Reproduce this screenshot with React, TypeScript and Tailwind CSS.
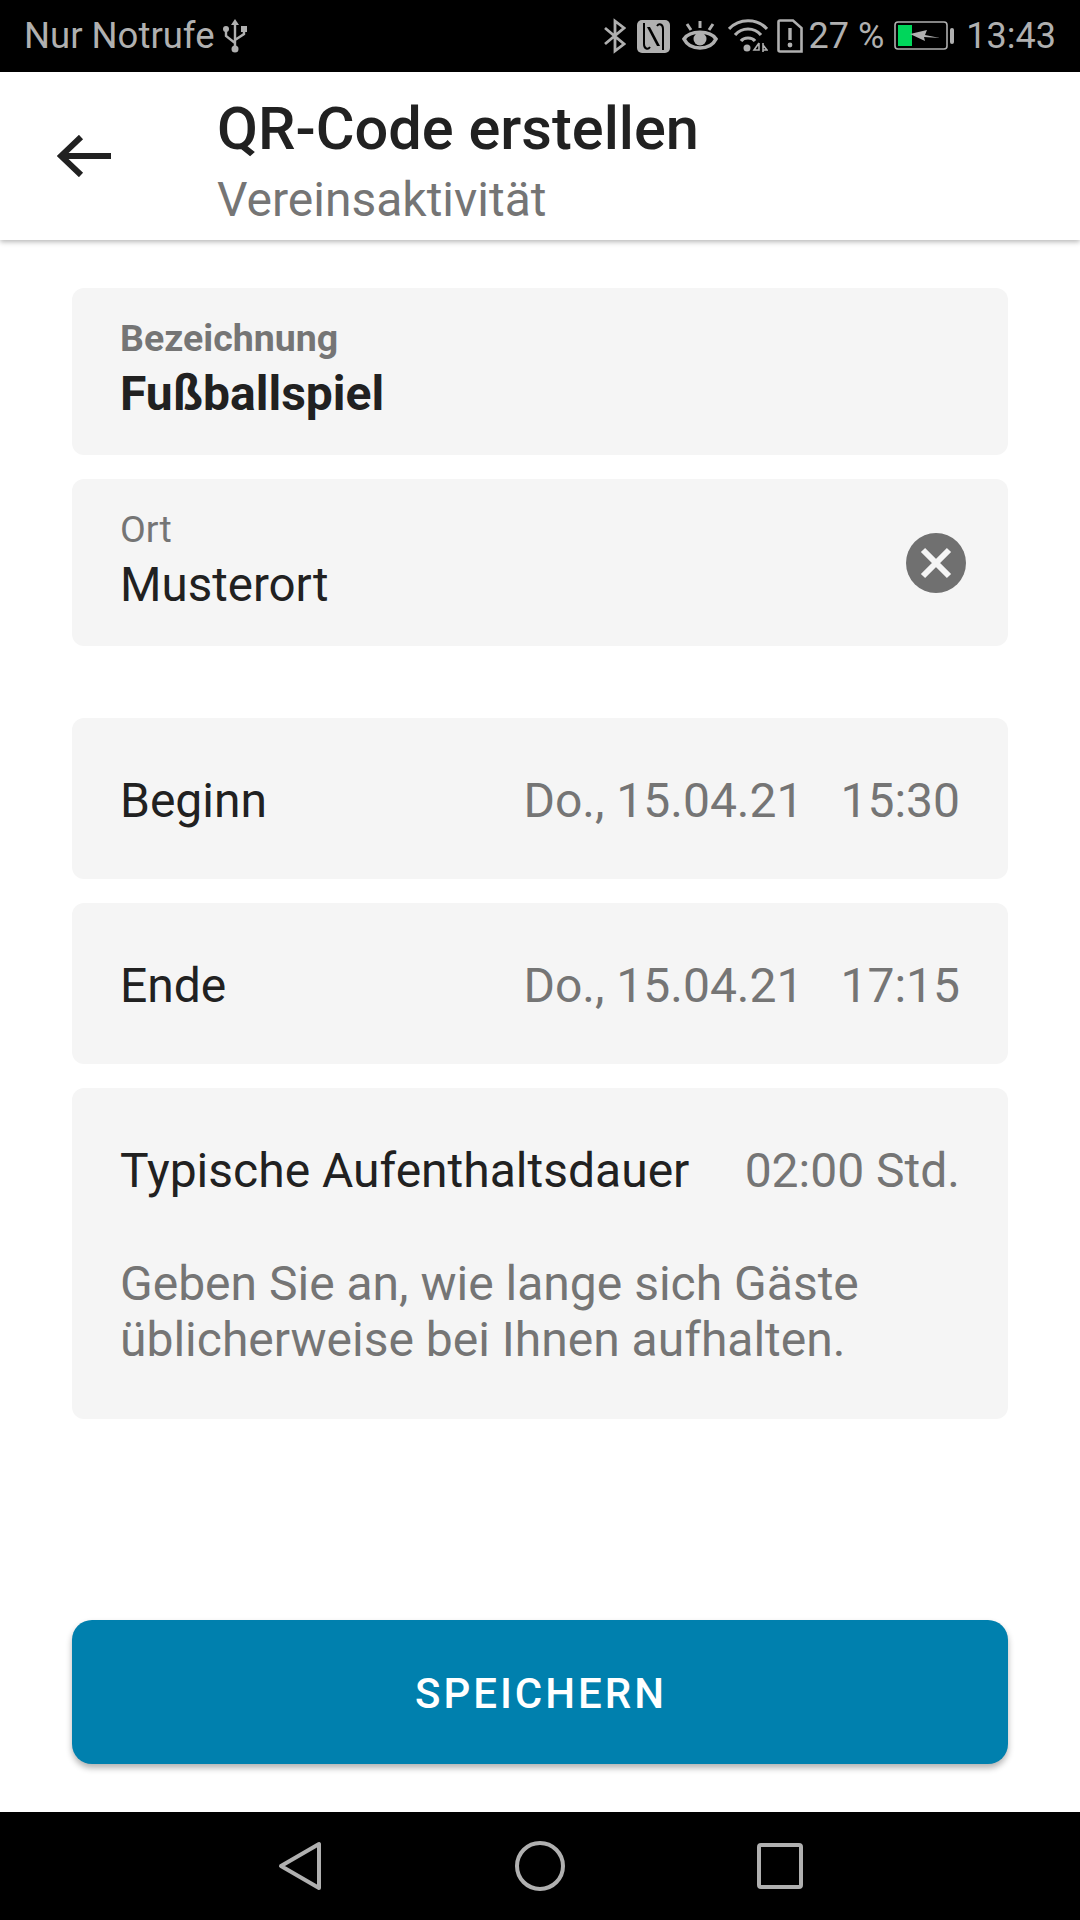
import React from "react";

const Card = ({ className = "", children }: { className?: string; children: React.ReactNode }) => (
  <div className={`rounded-xl bg-[#f5f5f5] px-12 ${className}`}>{children}</div>
);

const DateRow = ({ label, date, time }: { label: string; date: string; time: string }) => (
  <Card className="flex h-[161px] items-center justify-between pt-[4px]">
    <span className="text-[#212121]">{label}</span>
    <span className="flex gap-[37px] text-[#757575]">
      <span>{date}</span>
      <span>{time}</span>
    </span>
  </Card>
);

export default function App() {
  return (
    <div className="flex h-[1920px] w-[1080px] flex-col overflow-hidden bg-white text-[48px] font-['Roboto',sans-serif] leading-[56px]">
      <div className="flex h-[72px] shrink-0 items-center justify-between bg-black pl-[24px] pr-[24px] text-[36px] text-[#b0b0b0]">
        <div className="flex items-center gap-[9px]">
          <span className="text-[36.5px]">Nur Notrufe</span>
          <svg width="24" height="34" viewBox="0 0 24 34" fill="none" stroke="#b0b0b0" strokeWidth="2.4">
            <path d="M12 4V30M12 24L3 17V12M12 21L21 15V11" />
            <path d="M12 0L16 6H8Z" fill="#b0b0b0" stroke="none" />
            <circle cx="12" cy="30" r="3.5" fill="#b0b0b0" stroke="none" />
            <circle cx="3" cy="10" r="3" fill="#b0b0b0" stroke="none" />
            <rect x="18" y="7" width="6" height="6" fill="#b0b0b0" stroke="none" />
          </svg>
        </div>
        <div className="flex items-center">
          <svg width="22" height="36" viewBox="0 0 22 34" fill="none" stroke="#b0b0b0" strokeWidth="2.8">
            <path d="M1 9L20 25L11 32V2L20 9L1 25" />
          </svg>
          <svg width="33" height="33" viewBox="0 0 33 33" className="ml-[11px]">
            <rect width="33" height="33" rx="5" fill="#b0b0b0" />
            <path d="M7 3V24C7 29 11 30 13 27M26 30V9C26 4 22 3 20 6" fill="none" stroke="#000" strokeWidth="2" />
            <path d="M10 7H13L23 26H20Z" fill="#000" />
          </svg>
          <svg width="36" height="32" viewBox="0 0 36 32" fill="none" stroke="#b0b0b0" strokeWidth="3.6" className="ml-[12px]">
            <path d="M2 19C8 10 28 10 34 19C28 31 8 31 2 19Z" />
            <circle cx="18" cy="19" r="6.5" fill="#b0b0b0" stroke="none" />
            <path d="M18 1V8M5 4L9 10M31 4L27 10" strokeWidth="3" />
          </svg>
          <svg width="40" height="34" viewBox="0 0 40 34" fill="none" stroke="#b0b0b0" strokeWidth="3.2" className="ml-[10px]">
            <path d="M1 10C11 -1 29 -1 39 10M7 16C14 8 26 8 33 16M13 22C16 18 24 18 27 22" />
            <circle cx="19" cy="29" r="3.5" fill="#b0b0b0" stroke="none" />
            <path d="M31 24L26 31H31V24M35 24V33M35 26L39 31H35" strokeWidth="1.6" />
          </svg>
          <svg width="26" height="34" viewBox="0 0 26 34" fill="none" stroke="#b0b0b0" strokeWidth="2.6" className="ml-[9px]">
            <path d="M3 1.5H16L24.500 9V32.500H3C2 32.500 1.500 32 1.500 31V3C1.500 2 2 1.500 3 1.500Z" />
            <path d="M13 9V21" strokeWidth="3.4" />
            <circle cx="13" cy="26" r="2.4" fill="#b0b0b0" stroke="none" />
          </svg>
          <span className="ml-[6px]">27 %</span>
          <svg width="62" height="30" viewBox="0 0 62 30" fill="none" className="ml-[10px]">
            <rect x="1" y="1" width="52" height="27" rx="3" stroke="#b0b0b0" strokeWidth="1.6" />
            <rect x="4" y="4" width="14" height="21" fill="#00d65b" />
            <path d="M16 13L33 9L31 14L46 17L30 16L31 20Z" fill="#b0b0b0" />
            <rect x="56" y="7" width="4" height="16" rx="2" fill="#b0b0b0" />
          </svg>
          <span className="ml-[10px]">13:43</span>
        </div>
      </div>

      <div className="flex h-[168px] shrink-0 items-center bg-white shadow-[0_2px_5px_rgba(0,0,0,0.28)]">
        <div className="flex w-[217px] justify-start pl-[57px]">
          <svg width="54" height="42" viewBox="0 0 54 42" fill="none" stroke="#212121" strokeWidth="6">
            <path d="M54 21H4M24 2L4 21L24 40" />
          </svg>
        </div>
        <div className="flex flex-col pt-[15px]">
          <span className="text-[59.5px] font-medium leading-[72px] text-[#212121]">QR-Code erstellen</span>
          <span className="leading-[70px] text-[#757575]">Vereinsaktivität</span>
        </div>
      </div>

      <div className="flex flex-1 flex-col px-[72px] pt-[48px]">
        <Card className="flex h-[167px] flex-col justify-center pb-[5px]">
          <span className="text-[37.5px] font-bold leading-[50px] text-[#757575]">Bezeichnung</span>
          <span className="font-bold leading-[62px] text-[#212121]">Fußballspiel</span>
        </Card>
        <Card className="mt-6 flex h-[167px] items-center justify-between pr-[42px]">
          <div className="flex flex-col pb-[5px]">
            <span className="text-[37.5px] font-normal leading-[50px] text-[#757575]">Ort</span>
            <span className="text-[47.5px] leading-[62px] text-[#212121]">Musterort</span>
          </div>
          <svg width="60" height="60" viewBox="0 0 60 60">
            <circle cx="30" cy="30" r="30" fill="#707070" />
            <path d="M17 17L43 43M43 17L17 43" stroke="#f5f5f5" strokeWidth="6" />
          </svg>
        </Card>
        <div className="mt-[72px] flex flex-col gap-6">
          <DateRow label="Beginn" date="Do., 15.04.21" time="15:30" />
          <DateRow label="Ende" date="Do., 15.04.21" time="17:15" />
          <Card className="flex h-[331px] flex-col pt-[55px]">
            <div className="flex items-center justify-between">
              <span className="text-[#212121]">Typische Aufenthaltsdauer</span>
              <span className="text-[#757575]">02:00 Std.</span>
            </div>
            <p className="mt-[57px] text-[#757575]">
              Geben Sie an, wie lange sich Gäste
              <br />
              üblicherweise bei Ihnen aufhalten.
            </p>
          </Card>
        </div>
        <button className="mt-[201px] flex h-[144px] items-center justify-center rounded-[20px] bg-[#0080ae] pt-[3px] pl-[2px] text-[42px] font-medium tracking-[3px] text-white shadow-[0_4px_6px_rgba(0,0,0,0.3)]">
          SPEICHERN
        </button>
      </div>

      <div className="flex h-[108px] shrink-0 items-center bg-black pl-[278px]">
        <svg width="44" height="50" viewBox="0 0 44 50" fill="none" stroke="#b0b0b0" strokeWidth="4" strokeLinejoin="round">
          <path d="M41 3V47L3 25Z" />
        </svg>
        <svg width="50" height="50" viewBox="0 0 50 50" fill="none" stroke="#b0b0b0" strokeWidth="4" className="ml-[193px]">
          <circle cx="25" cy="25" r="23" />
        </svg>
        <svg width="46" height="46" viewBox="0 0 46 46" fill="none" stroke="#b0b0b0" strokeWidth="4" strokeLinejoin="round" className="ml-[192px]">
          <rect x="2" y="2" width="42" height="42" rx="2" />
        </svg>
      </div>
    </div>
  );
}
